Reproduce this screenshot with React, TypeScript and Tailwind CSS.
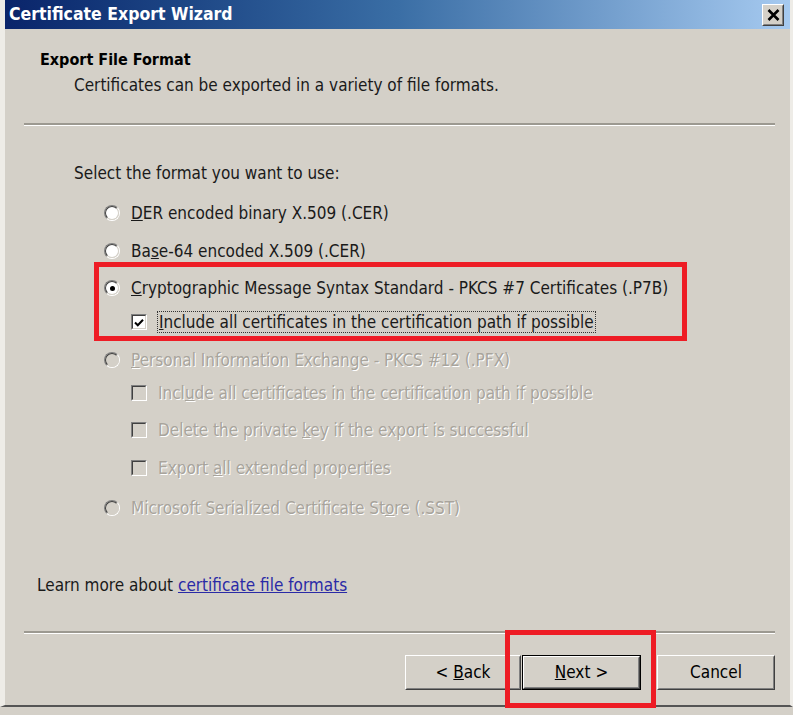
import React from "react";

const ui = "font-['DejaVu_Sans_Condensed','DejaVu_Sans',sans-serif]";

function Radio({ checked = false, disabled = false }: { checked?: boolean; disabled?: boolean }) {
  return (
    <span className="inline-flex w-4 h-4 shrink-0 rounded-full border border-t-[#808080] border-l-[#808080] border-r-white border-b-white">
      <span
        className={
          "flex flex-1 items-center justify-center rounded-full border border-t-[#404040] border-l-[#404040] border-r-[#d4d0c8] border-b-[#d4d0c8] " +
          (disabled ? "bg-[#d4d0c8]" : "bg-white")
        }
      >
        {checked && <span className="w-[5px] h-[5px] rounded-full bg-black" />}
      </span>
    </span>
  );
}

function Check({ checked = false, disabled = false }: { checked?: boolean; disabled?: boolean }) {
  return (
    <span className="inline-flex w-4 h-4 shrink-0 border border-t-[#808080] border-l-[#808080] border-r-white border-b-white">
      <span
        className={
          "flex flex-1 items-center justify-center border border-t-[#404040] border-l-[#404040] border-r-[#d4d0c8] border-b-[#d4d0c8] " +
          (disabled ? "bg-[#d4d0c8]" : "bg-white")
        }
      >
        {checked && (
          <svg width="10" height="9" viewBox="0 0 10 9">
            <path d="M1 4.5 L3.8 7.3 L9 1.8" fill="none" stroke="black" strokeWidth="2" />
          </svg>
        )}
      </span>
    </span>
  );
}

function Btn({ children, isDefault = false }: { children: React.ReactNode; isDefault?: boolean }) {
  return (
    <div className={"h-[35px] " + (isDefault ? "border border-black" : "")}>
      <div className="h-full border border-t-white border-l-white border-r-[#404040] border-b-[#404040]">
        <div className="h-full flex items-center justify-center border border-t-[#d4d0c8] border-l-[#d4d0c8] border-r-[#808080] border-b-[#808080] text-[17px] text-black">
          {children}
        </div>
      </div>
    </div>
  );
}

const dis = "text-[#a8a49c] [text-shadow:1px_1px_0_#ffffff]";

export default function App() {
  return (
    <div className={"relative w-[793px] h-[715px] overflow-hidden bg-[#d4d0c8] text-[17px] text-[#1a1a1a] " + ui}>
      <div className="flex flex-col h-[707px] border-l-[5px] border-r-[3px] border-[#eeece7] border-b-[2px] border-b-[#555555]">
        {/* title bar */}
        <div className="h-[29px] shrink-0 flex items-center justify-between bg-gradient-to-r from-[#0a246a] via-[#3a6ea5] to-[#a6caf0] pl-[4px] pr-[6px]">
          <span className="text-white font-bold text-[17.5px] leading-none">Certificate Export Wizard</span>
          <div className="w-[22px] h-[22px] border border-t-white border-l-white border-r-[#404040] border-b-[#404040] bg-[#d4d0c8]">
            <div className="w-full h-full flex items-center justify-center border border-t-[#d4d0c8] border-l-[#d4d0c8] border-r-[#808080] border-b-[#808080]">
              <svg width="13" height="12" viewBox="0 0 13 12">
                <path d="M1.5 1 L11.5 11 M11.5 1 L1.5 11" stroke="black" strokeWidth="2.6" />
              </svg>
            </div>
          </div>
        </div>

        {/* header */}
        <div className="mt-[21px] pl-[35px] leading-[20px] font-bold text-black text-[16px]">Export File Format</div>
        <div className="mt-[5px] pl-[69px] leading-[20px]">Certificates can be exported in a variety of file formats.</div>
        <div className="mt-[28px] ml-[19px] w-[751px] border-t-2 border-t-[#9c9991] border-b border-b-white" />

        {/* options */}
        <div className="mt-[37px] pl-[69px] leading-[20px]">Select the format you want to use:</div>

        <div className="mt-[20px] pl-[99px] h-[20px] flex items-center gap-[11px]">
          <Radio />
          <span className="leading-[20px]"><u>D</u>ER encoded binary X.509 (.CER)</span>
        </div>
        <div className="mt-[18px] pl-[99px] h-[20px] flex items-center gap-[11px]">
          <Radio />
          <span className="leading-[20px]">Ba<u>s</u>e-64 encoded X.509 (.CER)</span>
        </div>
        <div className="mt-[17px] pl-[99px] h-[20px] flex items-center gap-[11px]">
          <Radio checked />
          <span className="leading-[20px]"><u>C</u>ryptographic Message Syntax Standard - PKCS #7 Certificates (.P7B)</span>
        </div>
        <div className="mt-[14px] pl-[126px] h-[20px] flex items-center gap-[11px]">
          <Check checked />
          <span className="leading-[20px] px-[1px] outline outline-1 outline-dotted outline-[#333333]"><u>I</u>nclude all certificates in the certification path if possible</span>
        </div>

        <div className="mt-[18px] pl-[99px] h-[20px] flex items-center gap-[11px]">
          <Radio disabled />
          <span className={"leading-[20px] " + dis}><u>P</u>ersonal Information Exchange - PKCS #12 (.PFX)</span>
        </div>
        <div className="mt-[13px] pl-[126px] h-[20px] flex items-center gap-[11px]">
          <Check disabled />
          <span className={"leading-[20px] " + dis}>Incl<u>u</u>de all certificates in the certification path if possible</span>
        </div>
        <div className="mt-[17px] pl-[126px] h-[20px] flex items-center gap-[11px]">
          <Check disabled />
          <span className={"leading-[20px] " + dis}>Delete the private <u>k</u>ey if the export is successful</span>
        </div>
        <div className="mt-[18px] pl-[126px] h-[20px] flex items-center gap-[11px]">
          <Check disabled />
          <span className={"leading-[20px] " + dis}>Export <u>a</u>ll extended properties</span>
        </div>
        <div className="mt-[20px] pl-[99px] h-[20px] flex items-center gap-[11px]">
          <Radio disabled />
          <span className={"leading-[20px] " + dis}>Microsoft Serialized Certificate St<u>o</u>re (.SST)</span>
        </div>

        {/* learn more */}
        <div className="mt-[57px] pl-[32px] leading-[20px]">
          Learn more about <span className="text-[#2a2aa6] underline">certificate file formats</span>
        </div>

        <div className="mt-[36px] ml-[19px] w-[751px] border-t-2 border-t-[#9c9991] border-b border-b-white" />

        {/* buttons */}
        <div className="mt-[21px] flex pl-[400px]">
          <div className="w-[116px]">
            <Btn>
              <span className="mr-[5px]">&lt;</span>
              <u>B</u>ack
            </Btn>
          </div>
          <div className="w-[119px] ml-[1px]">
            <Btn isDefault>
              <u>N</u>ext<span className="ml-[5px]">&gt;</span>
            </Btn>
          </div>
          <div className="w-[118px] ml-[16px]">
            <Btn>Cancel</Btn>
          </div>
        </div>
      </div>

      {/* red annotation boxes */}
      <div className="absolute left-[94px] top-[262px] w-[593px] h-[79px] border-[5px] border-[#ee1c25]" />
      <div className="absolute left-[505px] top-[630px] w-[151px] h-[78px] border-[5px] border-[#ee1c25]" />
    </div>
  );
}
